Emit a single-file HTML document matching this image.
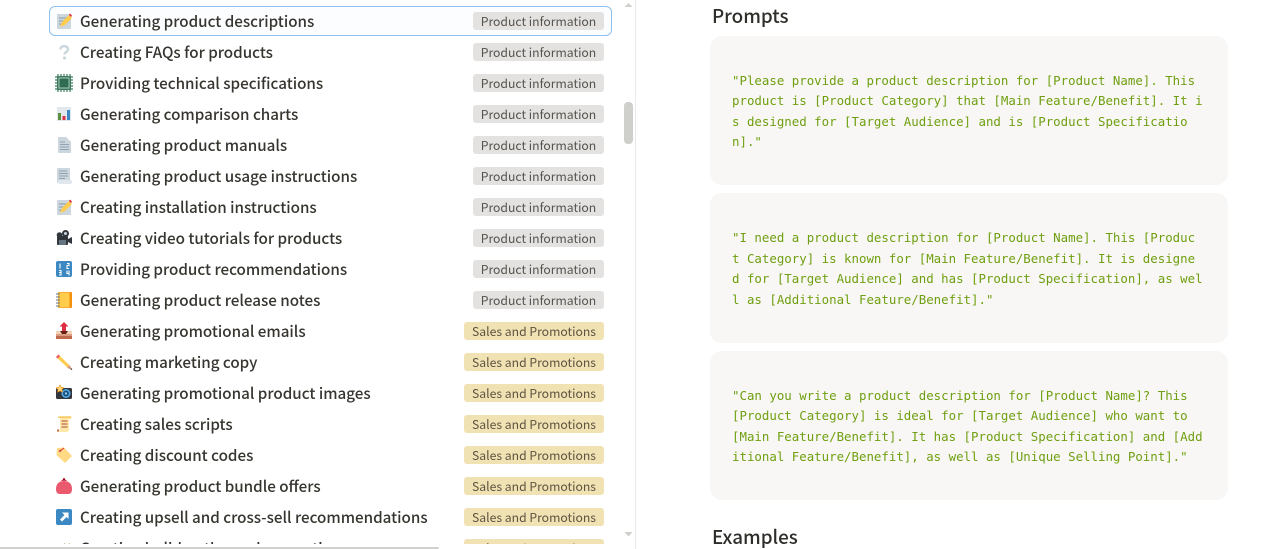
<!DOCTYPE html>
<html><head><meta charset="utf-8">
<style>
html,body{margin:0;padding:0;background:#fff;width:1283px;height:549px;overflow:hidden}
body{position:relative;font-family:"Liberation Sans","Noto Sans CJK JP",sans-serif}
#list{position:absolute;left:0;top:0;width:620px;height:544px;overflow:hidden}
.r{position:absolute;left:0;width:620px;height:31px}
.r svg{position:absolute;left:55px;top:6px;width:18px;height:18px}
.t{position:absolute;left:80px;top:0;line-height:31px;font-size:15.2px;font-weight:500;color:#37352f;white-space:nowrap;font-family:"Noto Sans CJK JP",sans-serif}
.g{position:absolute;top:6px;height:18px;line-height:18px;border-radius:3px;font-size:12.2px;text-align:center;white-space:nowrap;font-family:"Noto Sans CJK JP",sans-serif}
.p{left:473px;width:131px;background:#e3e2e0;color:#55534e}
.s{left:464px;width:140px;background:#f1e2b4;color:#5c5340}
#sel{position:absolute;left:49px;top:6px;width:561px;height:28px;border:1px solid #8fc1f0;border-radius:6px;background:#fcfdff}
.b{position:absolute;left:710px;width:518px;background:#f8f7f5;border-radius:12px}
.l{position:absolute;left:732px;white-space:pre;font-family:"DejaVu Sans Mono",monospace;font-size:12.42px;line-height:20px;color:#6f9f10}
h2{position:absolute;left:712px;margin:0;font-size:18.8px;line-height:24px;font-weight:500;color:#2f2e2a;font-family:"Noto Sans CJK JP",sans-serif}
</style></head><body>
<div id="list">
<div id="sel"></div>
<div class="r" style="top:6px"><svg viewBox="0 0 18 18"><rect x="2" y="2" width="14" height="15" rx="1" fill="#ccd6dd"/><path d="M4 6h9M4 9h6M4 12h4" stroke="#8899a6"/><path d="M5 15l2-5 7-7 3 3-7 7z" fill="#ffcc4d"/><path d="M14 3l1-1.500 2 2-1 1.500z" fill="#dd2e44"/></svg><span class="t">Generating product descriptions</span><span class="g p">Product information</span></div>
<div class="r" style="top:37px"><svg viewBox="0 0 18 18"><path d="M5.500 6.500c0-4.500 7.500-4.500 7.500 0 0 2.500-3.500 2.500-3.500 5" fill="none" stroke="#ccd6dd" stroke-width="2.400"/><circle cx="9.500" cy="15" r="1.600" fill="#ccd6dd"/></svg><span class="t">Creating FAQs for products</span><span class="g p">Product information</span></div>
<div class="r" style="top:68px"><svg viewBox="0 0 18 18"><path d="M3 0v18M6 0v18M9 0v18M12 0v18M15 0v18M0 3h18M0 6h18M0 9h18M0 12h18M0 15h18" stroke="#3e7a5e" stroke-width="1.200"/><rect x="2" y="2" width="14" height="14" rx="1" fill="#3e7a5e"/><rect x="3.500" y="3.500" width="11" height="11" fill="#a5c9b6"/><rect x="4.500" y="4.500" width="9" height="9" fill="#2f6b52"/></svg><span class="t">Providing technical specifications</span><span class="g p">Product information</span></div>
<div class="r" style="top:99px"><svg viewBox="0 0 18 18"><rect x="2" y="2" width="14" height="14" fill="#e1e8ed"/><rect x="3" y="8" width="3" height="7" fill="#5c913b"/><rect x="7.500" y="11" width="3" height="4" fill="#dd2e44"/><rect x="12" y="5" width="3" height="10" fill="#3b88c3"/></svg><span class="t">Generating comparison charts</span><span class="g p">Product information</span></div>
<div class="r" style="top:130px"><svg viewBox="0 0 18 18"><path d="M3 2q0-1 1-1h7l5 5v10q0 1-1 1H4q-1 0-1-1z" fill="#ccd6dd"/><path d="M5 6h5M5 8.500h9M5 11h9M5 13.500h9" stroke="#8fa3b2"/></svg><span class="t">Generating product manuals</span><span class="g p">Product information</span></div>
<div class="r" style="top:161px"><svg viewBox="0 0 18 18"><rect x="2" y="1" width="13" height="15" rx="1" fill="#ccd6dd"/><rect x="3" y="13" width="14" height="4" rx="1.500" fill="#e1e8ed"/><path d="M4 4h8M4 6.500h9M4 9h9M4 11.500h6" stroke="#8fa3b2"/></svg><span class="t">Generating product usage instructions</span><span class="g p">Product information</span></div>
<div class="r" style="top:192px"><svg viewBox="0 0 18 18"><rect x="2" y="2" width="14" height="15" rx="1" fill="#ccd6dd"/><path d="M4 6h9M4 9h6M4 12h4" stroke="#8899a6"/><path d="M5 15l2-5 7-7 3 3-7 7z" fill="#ffcc4d"/><path d="M14 3l1-1.500 2 2-1 1.500z" fill="#dd2e44"/></svg><span class="t">Creating installation instructions</span><span class="g p">Product information</span></div>
<div class="r" style="top:223px"><svg viewBox="0 0 18 18"><circle cx="4.500" cy="6" r="2.800" fill="#31373d"/><circle cx="10.500" cy="4.500" r="3.500" fill="#31373d"/><circle cx="10.500" cy="4.500" r="1.500" fill="#ccd6dd"/><rect x="2" y="7" width="11" height="9" rx="1" fill="#31373d"/><rect x="4" y="11" width="7" height="5" fill="#66757f"/><path d="M13 10l4-2v7l-4-2z" fill="#31373d"/></svg><span class="t">Creating video tutorials for products</span><span class="g p">Product information</span></div>
<div class="r" style="top:254px"><svg viewBox="0 0 18 18"><rect x="1" y="1" width="16" height="16" rx="2" fill="#3b88c3"/><path d="M5 3.500v5M12 3.500h2v2h-2v3h2M4 10.500h2v2H4m2 0v2.500H4M12 10.500v3h2.500M14 10.500v5" fill="none" stroke="#fff" stroke-width="1.100"/></svg><span class="t">Providing product recommendations</span><span class="g p">Product information</span></div>
<div class="r" style="top:285px"><svg viewBox="0 0 18 18"><rect x="3" y="1" width="14" height="16" rx="1" fill="#f4900c"/><rect x="3.500" y="1.500" width="11" height="15" fill="#ffcc4d"/><path d="M1 3h4M1 6h4M1 9h4M1 12h4M1 15h4" stroke="#66757f"/></svg><span class="t">Generating product release notes</span><span class="g p">Product information</span></div>
<div class="r" style="top:316px"><svg viewBox="0 0 18 18"><path d="M9 0l4.500 4.500H11V9H7V4.500H4.500z" fill="#dd2e44"/><path d="M1 9h16v8H1z" fill="#d99e82"/><rect x="1" y="9" width="16" height="3" fill="#f4d2b4"/><path d="M5 9h8l-2 3H7z" fill="#662113"/><rect x="1" y="14" width="16" height="3" fill="#c1694f"/></svg><span class="t">Generating promotional emails</span><span class="g s">Sales and Promotions</span></div>
<div class="r" style="top:347px"><svg viewBox="0 0 18 18"><path d="M1 4l2.500-2.500L14.500 12.500 12.500 14.500z" fill="#ffcc4d"/><path d="M1 4l2.500-2.500 1.500 1.500-2.500 2.500z" fill="#ea596e"/><path d="M12 14.800l2.800-2.800 2.500 5.300z" fill="#d99e82"/><path d="M15.500 16l1-1 .8 2.300z" fill="#292f33"/></svg><span class="t">Creating marketing copy</span><span class="g s">Sales and Promotions</span></div>
<div class="r" style="top:378px"><svg viewBox="0 0 18 18"><rect x="1" y="4" width="16" height="11" rx="1.500" fill="#31373d"/><circle cx="11" cy="9.500" r="4.500" fill="#55acee"/><circle cx="11" cy="9.500" r="3" fill="#1c4f78"/><circle cx="11" cy="9.500" r="1.200" fill="#88c9f9"/><path d="M5 1l1.200 2.300 2.600.4-1.900 1.800.5 2.600L5 6.900 2.600 8.100l.5-2.600L1.200 3.700l2.600-.4z" fill="#ffd983" stroke="#f4900c" stroke-width=".6"/></svg><span class="t">Generating promotional product images</span><span class="g s">Sales and Promotions</span></div>
<div class="r" style="top:409px"><svg viewBox="0 0 18 18"><path d="M5 1h11q1.500 1.500 0 3h-2v10q0 3-3 3H3l2-2z" fill="#ffe8a8"/><rect x="3" y="1.500" width="13" height="1.500" fill="#f4c968"/><path d="M6.500 6h6M6.500 9h6M6.500 12h6" stroke="#c1694f" stroke-width="1.200"/><rect x="2" y="14.500" width="2" height="2" fill="#c1694f"/></svg><span class="t">Creating sales scripts</span><span class="g s">Sales and Promotions</span></div>
<div class="r" style="top:440px"><svg viewBox="0 0 18 18"><path d="M2 2l7-.5 8 8.500-7 7-8.500-8z" fill="#ffd983"/><circle cx="5" cy="5" r="1.200" fill="#c1694f"/><path d="M5 5l4-3" stroke="#dd2e44"/></svg><span class="t">Creating discount codes</span><span class="g s">Sales and Promotions</span></div>
<div class="r" style="top:471px"><svg viewBox="0 0 18 18"><path d="M1 12c0-5 3-8 8-8s8 3 8 8c0 4-2 5-4 5H5c-2 0-4-1-4-5z" fill="#ea596e"/><path d="M6 4q3-4 6 0z" fill="#c9485c"/><circle cx="9" cy="2" r="1" fill="#a0041e"/></svg><span class="t">Generating product bundle offers</span><span class="g s">Sales and Promotions</span></div>
<div class="r" style="top:502px"><svg viewBox="0 0 18 18"><rect x="1" y="1" width="16" height="16" rx="2" fill="#3b88c3"/><path d="M7 4.500h6.500V11l-2-2-4.500 4.500-2-2L9.500 7z" fill="#fff"/></svg><span class="t">Creating upsell and cross-sell recommendations</span><span class="g s">Sales and Promotions</span></div>
<div class="r" style="top:533px"><svg viewBox="0 0 18 18"><rect x="1" y="6" width="4" height="8" fill="#ffac33"/><path d="M6 7h11M9 5l3 3 3-3" stroke="#5c913b" stroke-width="2" fill="none"/></svg><span class="t">Creating holiday-themed promotions</span><span class="g s">Sales and Promotions</span></div>
</div>
<div style="position:absolute;left:635px;top:0;width:1px;height:549px;background:#e9e9e7"></div>
<svg style="position:absolute;left:623px;top:0" width="12" height="549"><path d="M5.500 3l4 4h-8z" fill="#cfcfcb"/><path d="M1.500 532h8l-4 4.500z" fill="#cfcfcb"/><rect x="1" y="102" width="9" height="42" rx="4" fill="#cfcfcb"/></svg>
<div style="position:absolute;left:0;top:547px;width:439px;height:2px;background:#d1d1cd;border-radius:0 2px 0 0"></div>
<h2 style="top:4px">Prompts</h2>
<div class="b" style="top:36px;height:149px"></div>
<div class="l" style="top:71px">"Please provide a product description for [Product Name]. This</div>
<div class="l" style="top:90.500px">product is [Product Category] that [Main Feature/Benefit]. It i</div>
<div class="l" style="top:112px">s designed for [Target Audience] and is [Product Specificatio</div>
<div class="l" style="top:131.500px">n]."</div>
<div class="b" style="top:193px;height:150px"></div>
<div class="l" style="top:228px">"I need a product description for [Product Name]. This [Produc</div>
<div class="l" style="top:249px">t Category] is known for [Main Feature/Benefit]. It is designe</div>
<div class="l" style="top:268.500px">d for [Target Audience] and has [Product Specification], as wel</div>
<div class="l" style="top:290px">l as [Additional Feature/Benefit]."</div>
<div class="b" style="top:351px;height:149px"></div>
<div class="l" style="top:386px">"Can you write a product description for [Product Name]? This</div>
<div class="l" style="top:405.500px">[Product Category] is ideal for [Target Audience] who want to</div>
<div class="l" style="top:427px">[Main Feature/Benefit]. It has [Product Specification] and [Add</div>
<div class="l" style="top:446.500px">itional Feature/Benefit], as well as [Unique Selling Point]."</div>
<h2 style="top:525px">Examples</h2>
</body></html>
